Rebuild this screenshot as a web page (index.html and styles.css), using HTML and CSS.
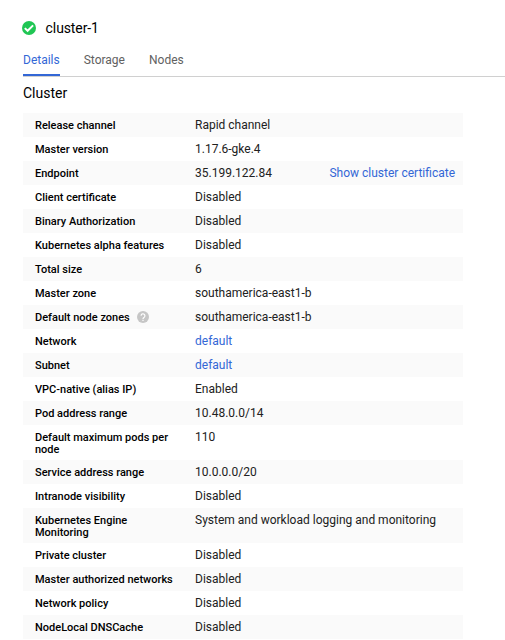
FILE: index.html
```html
<!DOCTYPE html>
<html lang="en">
<head>
<meta charset="utf-8">
<title>cluster-1</title>
<link rel="stylesheet" href="styles.css">
</head>
<body>
<header class="head">
<svg class="ok" viewBox="0 0 14 14"><circle cx="7" cy="7" r="7" fill="#20c654"/><path d="M2.8 7.1l2.8 2.7 5.5-5.4" fill="none" stroke="#fff" stroke-width="2"/></svg>
<h1>cluster-1</h1>
</header>
<nav class="tabs"><a class="tab active">Details</a><a class="tab">Storage</a><a class="tab">Nodes</a></nav>
<h2>Cluster</h2>
<dl class="table">
<div class="row"><dt>Release channel</dt><dd>Rapid channel</dd></div>
<div class="row"><dt>Master version</dt><dd>1.17.6-gke.4</dd></div>
<div class="row"><dt>Endpoint</dt><dd>35.199.122.84</dd><dd class="action"><a>Show cluster certificate</a></dd></div>
<div class="row"><dt>Client certificate</dt><dd>Disabled</dd></div>
<div class="row"><dt>Binary Authorization</dt><dd>Disabled</dd></div>
<div class="row"><dt>Kubernetes alpha features</dt><dd>Disabled</dd></div>
<div class="row"><dt>Total size</dt><dd>6</dd></div>
<div class="row"><dt>Master zone</dt><dd>southamerica-east1-b</dd></div>
<div class="row"><dt>Default node zones<svg class="help" viewBox="0 0 12 12"><circle cx="6" cy="6" r="6" fill="#c6c6c6"/><path d="M4.1 4.7a1.9 1.9 0 1 1 3.2 1.4C6.5 6.8 6 7 6 8" fill="none" stroke="#fff" stroke-width="1.2"/><path d="M5.4 8.8h1.2V10H5.4z" fill="#fff"/></svg></dt><dd>southamerica-east1-b</dd></div>
<div class="row"><dt>Network</dt><dd><a>default</a></dd></div>
<div class="row"><dt>Subnet</dt><dd><a>default</a></dd></div>
<div class="row"><dt>VPC-native (alias IP)</dt><dd>Enabled</dd></div>
<div class="row"><dt>Pod address range</dt><dd>10.48.0.0/14</dd></div>
<div class="row"><dt>Default maximum pods per node</dt><dd>110</dd></div>
<div class="row"><dt>Service address range</dt><dd>10.0.0.0/20</dd></div>
<div class="row"><dt>Intranode visibility</dt><dd>Disabled</dd></div>
<div class="row"><dt>Kubernetes Engine Monitoring</dt><dd>System and workload logging and monitoring</dd></div>
<div class="row"><dt>Private cluster</dt><dd>Disabled</dd></div>
<div class="row"><dt>Master authorized networks</dt><dd>Disabled</dd></div>
<div class="row"><dt>Network policy</dt><dd>Disabled</dd></div>
<div class="row"><dt>NodeLocal DNSCache</dt><dd>Disabled</dd></div>
</dl>
</body>
</html>
```
FILE: styles.css
```css
* { box-sizing: border-box; }
body { margin: 0; padding: 18px 0 0 23px; height: 640px; overflow: hidden; background: #fff; color: #212121; font-family: Roboto, "Liberation Sans", sans-serif; font-size: 12px; }
.head { display: flex; align-items: center; height: 20px; }
.ok { width: 14px; height: 14px; margin: 0 9.6px 0 -1px; }
h1 { margin: 0; font-size: 14px; font-weight: 400; letter-spacing: -.1px; color: #000; }
.tabs { display: flex; gap: 24px; height: 39px; border-bottom: 1px solid #d0d0d0; }
.tab { height: 38px; line-height: 44px; color: #616161; }
.active { color: #3367d6; border-bottom: 2px solid #3367d6; }
h2 { margin: 8px 0 11px; font-size: 14px; line-height: 17px; font-weight: 400; color: #000; }
.table { width: 440px; margin: 0; }
.row { display: flex; min-height: 24px; padding: 6px 8px 4px 12px; line-height: 12px; }
.row:nth-child(odd) { background: #fafafa; }
dt { width: 160px; padding: 1px 12px 0 0; font-size: 11px; font-weight: 500; color: #000; }
dd { margin: 0; }
.action { margin-left: auto; }
.row a { color: #3367d6; }
.help { width: 12px; height: 12px; margin: -1px 0 0 7px; vertical-align: top; }
```
